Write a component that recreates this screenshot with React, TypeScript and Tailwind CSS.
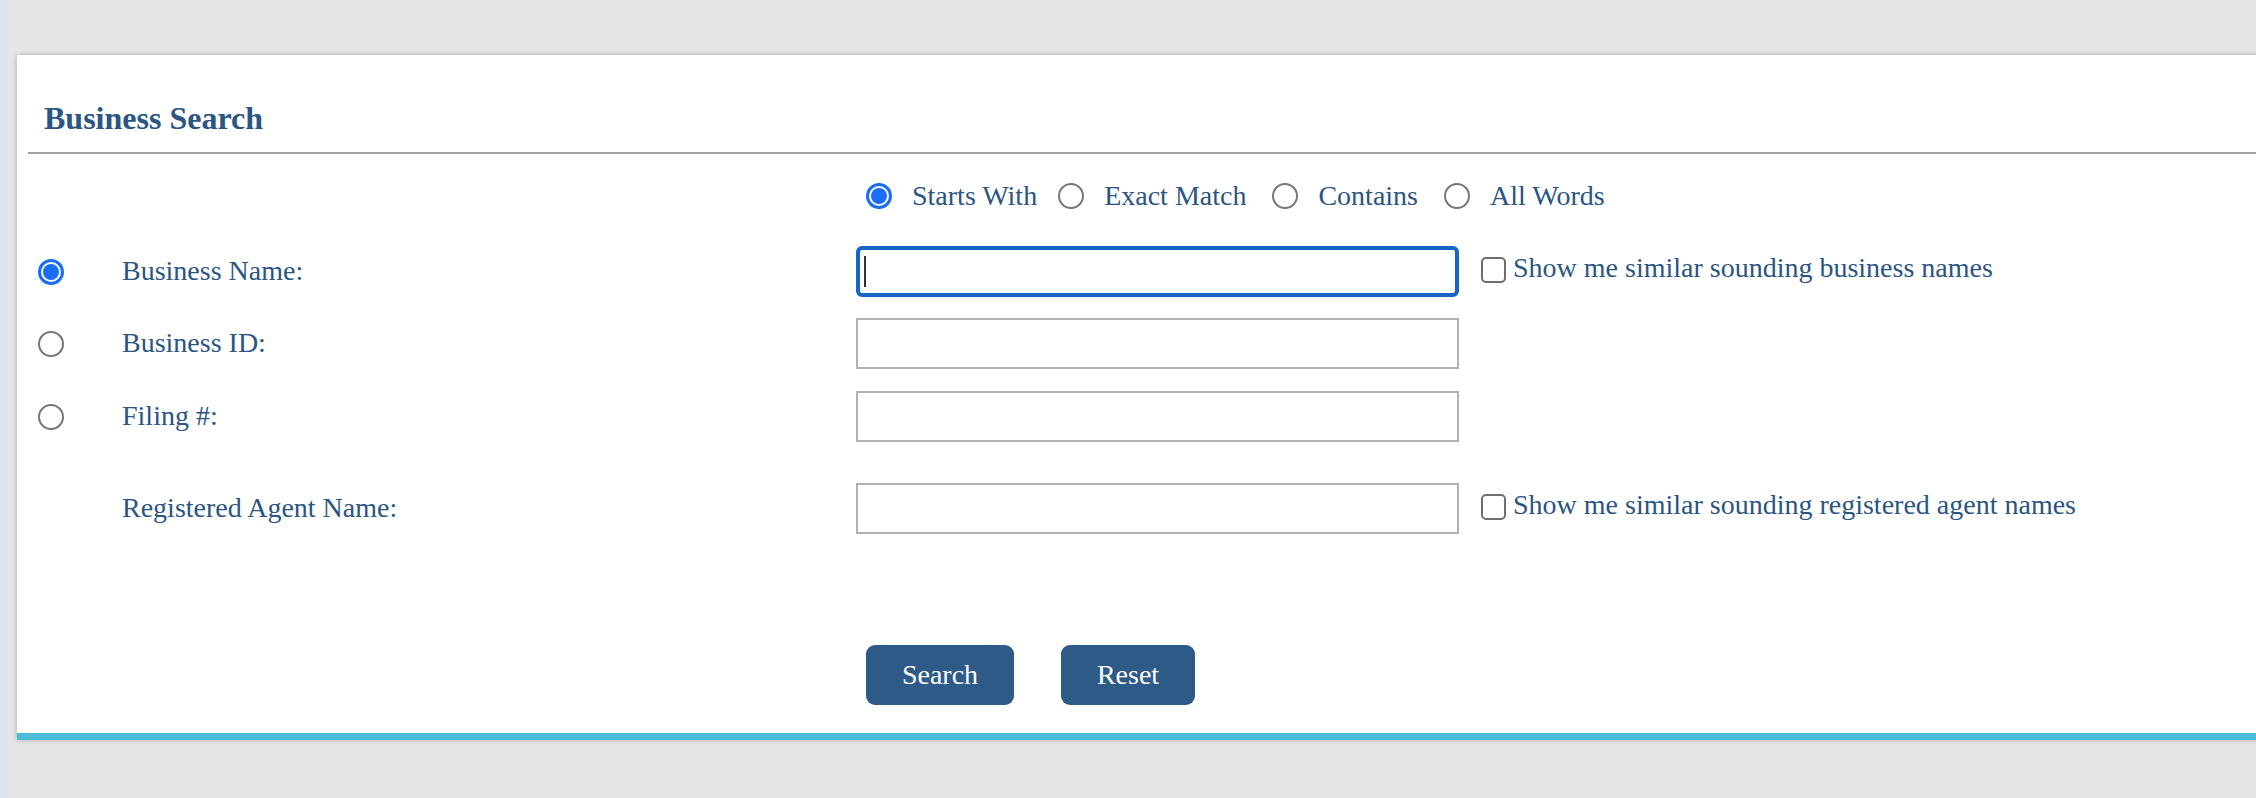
import React from "react";

const TEXT = "text-[#2b5582]";

function Radio({ checked = false }: { checked?: boolean }) {
  if (checked) {
    return (
      <span className="flex h-[26px] w-[26px] shrink-0 items-center justify-center rounded-full border-[3px] border-[#1a6ef5] bg-white">
        <span className="h-[16px] w-[16px] rounded-full bg-[#1a6ef5]" />
      </span>
    );
  }
  return <span className="h-[26px] w-[26px] shrink-0 rounded-full border-2 border-[#767676] bg-white" />;
}

function Checkbox() {
  return <span className="mt-[11px] h-[26px] w-[25px] shrink-0 rounded-[5px] border-2 border-[#6e6e6e] bg-white" />;
}

interface FieldRowProps {
  label: string;
  radio?: boolean;
  checked?: boolean;
  focused?: boolean;
  similar?: string;
  className?: string;
}

function FieldRow({ label, radio, checked, focused, similar, className }: FieldRowProps) {
  return (
    <div className={`flex h-[51px] items-center ${className ?? ""}`}>
      <div className="flex w-[105px] shrink-0 pl-[21px]">{radio && <Radio checked={checked} />}</div>
      <span className={`w-[734px] shrink-0 pb-[2px] text-[28px] leading-[34px] ${TEXT}`}>{label}</span>
      {focused ? (
        <div className="flex h-[51px] w-[603px] shrink-0 items-center rounded-[6px] border-4 border-[#1666c9] bg-white pl-[4px]">
          <span className="h-[31px] w-[2px] bg-[#333]" />
        </div>
      ) : (
        <input className="h-[51px] w-[603px] shrink-0 border-2 border-[#b1b1b1] bg-white outline-none" />
      )}
      {similar && (
        <div className="ml-[22px] flex items-start self-start">
          <Checkbox />
          <span className={`ml-[7px] mt-[5px] text-[28px] leading-[34px] ${TEXT}`}>{similar}</span>
        </div>
      )}
    </div>
  );
}

export default function App() {
  const modes = [
    { label: "Starts With", checked: true, gap: "mr-[21px]" },
    { label: "Exact Match", checked: false, gap: "mr-[26px]" },
    { label: "Contains", checked: false, gap: "mr-[26px]" },
    { label: "All Words", checked: false, gap: "" },
  ];

  return (
    <div className="flex h-[798px] w-[2256px] overflow-hidden bg-[#e6e6e6] font-['Liberation_Serif','Times_New_Roman',serif]">
      <div className="w-[8px] shrink-0 bg-[#dbe4ed]" />

      <div className="ml-[9px] mt-[55px] flex h-[685px] w-[2280px] shrink-0 flex-col self-start border-b-[7px] border-[#4dbcd8] bg-white shadow-[0_0_6px_rgba(0,0,0,0.25)]">
        {/* Title */}
        <h1 className={`pl-[27px] pt-[43px] text-[32px] font-bold leading-[40px] ${TEXT}`}>Business Search</h1>
        <div className="ml-[11px] mt-[14px] h-[2px] bg-[#a3a3a3]" />

        {/* Match mode */}
        <div className="mt-[22px] flex h-[40px] items-center pl-[849px]">
          {modes.map((m) => (
            <div key={m.label} className={`flex items-center ${m.gap}`}>
              <Radio checked={m.checked} />
              <span className={`ml-[20px] text-[28px] leading-[34px] ${TEXT}`}>{m.label}</span>
            </div>
          ))}
        </div>

        {/* Fields */}
        <FieldRow
          className="mt-[30px]"
          label="Business Name:"
          radio
          checked
          focused
          similar="Show me similar sounding business names"
        />
        <FieldRow className="mt-[21px]" label="Business ID:" radio />
        <FieldRow className="mt-[22px]" label="Filing #:" radio />
        <FieldRow
          className="mt-[41px]"
          label="Registered Agent Name:"
          similar="Show me similar sounding registered agent names"
        />

        {/* Actions */}
        <div className="mt-[111px] flex pl-[849px]">
          <button className="h-[60px] w-[148px] rounded-[9px] bg-[#2d5a87] text-[28px] text-white">Search</button>
          <button className="ml-[47px] h-[60px] w-[134px] rounded-[9px] bg-[#2d5a87] text-[28px] text-white">Reset</button>
        </div>
      </div>
    </div>
  );
}
